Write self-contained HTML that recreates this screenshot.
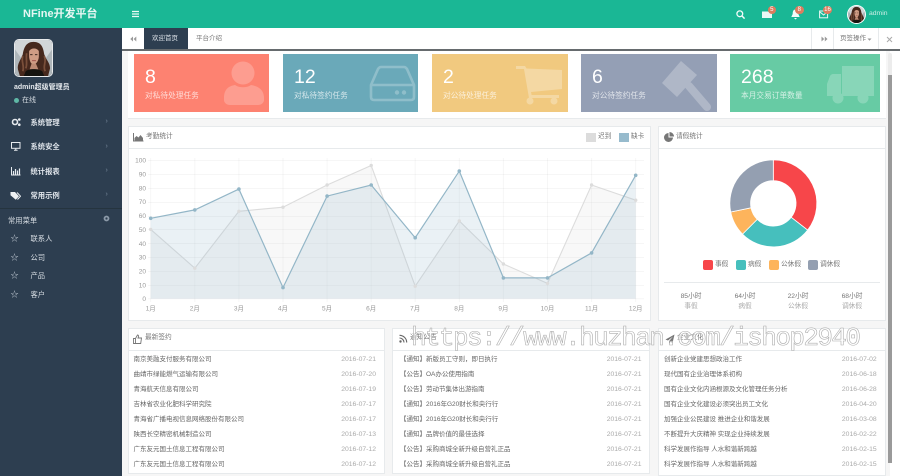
<!DOCTYPE html>
<html lang="zh"><head><meta charset="utf-8"><title>NFine开发平台</title>
<style>
html,body{margin:0;padding:0;width:900px;height:476px;overflow:hidden;background:#fff}
body{position:relative;font-family:"Liberation Sans","Noto Sans CJK SC",sans-serif;color:#676a6c}
#w{position:absolute;left:0;top:0;width:900px;height:476px;overflow:hidden;filter:blur(.3px)}
.a,.t{position:absolute}
.t{white-space:nowrap;line-height:1}
.panel{position:absolute;background:#fff;border:1px solid #e7eaec;box-sizing:border-box}
.hd{position:absolute;left:0;right:0;top:0;height:21px;border-bottom:1px solid #e7eaec}
.card{position:absolute;top:54px;height:58px;color:#fff;overflow:hidden}
.card .n{position:absolute;left:11px;top:13.500px;font-size:19.500px;line-height:1}
.card .l{position:absolute;left:11px;top:38px;font-size:7.700px;line-height:1;white-space:nowrap;opacity:.72}
.card svg{position:absolute;left:0;top:0}
.m{color:#dfe4ea;font-size:7.300px;font-weight:bold}
.s{color:#c4ccd6;font-size:7.300px}
.row{position:absolute;height:15px;line-height:15px;font-size:6.500px;white-space:nowrap;color:#666}
.row b{position:absolute;right:0;top:0;font-weight:normal;font-size:6.800px;color:#aaa}
.tt{font-size:6.700px;color:#777}
</style></head>
<body>
<svg width="0" height="0" style="position:absolute"><defs>
<symbol id="face" viewBox="0 0 38 38">
<rect width="38" height="38" fill="#aeb5b9"/>
<path d="M0 0H38V10L31 20 7 20 0 10Z" fill="#d2d6d8"/>
<path d="M19 2C11 2 9 9 8 15 6 21 2 25 3 31L5 38H34L36 30C36 24 32 21 30 15 29 8 27 2 19 2Z" fill="#46281d"/>
<path d="M14.500 12C16 8 23 8 24.500 12L24.500 18C24 23 21 26 19 26 17 26 15 23 14.500 18Z" fill="#cf9c84"/>
<path d="M17 25H21.500L24 31 15 31Z" fill="#bd8a73"/>
<path d="M11 33C14 30 24 30 28 33L30 38H9Z" fill="#15130f"/>
<path d="M15.500 15.500h2.500M20.500 15.500h2.500" stroke="#2a1a14" stroke-width=".9"/>
<path d="M17.500 21.800h4" stroke="#9c4a44" stroke-width=".9"/>
<path d="M8 17C6 23 10 27 8 33M30 17C33 23 28 27 31 33M12 14C11 20 13 26 11 30" stroke="#7a4f3a" stroke-width="1.800" fill="none"/>
</symbol>
</defs></svg>
<div id="w">

<!-- topbar -->
<div class="a" style="left:0;top:0;width:900px;height:28px;background:#1ab795"></div>
<div class="t" style="left:23px;top:9px;font-size:11px;font-weight:bold;color:#e6f7f3">NFine开发平台</div>
<svg class="a" style="left:131px;top:10px" width="9" height="8"><path d="M1 1.500h7M1 4h7M1 6.500h7" stroke="#eafaf6" stroke-width="1.200"/></svg>
<svg class="a" style="left:735px;top:9px" width="11" height="11"><circle cx="4.800" cy="4.800" r="2.900" fill="none" stroke="#f2fbf9" stroke-width="1.300"/><path d="M7 7l2.600 2.600" stroke="#f2fbf9" stroke-width="1.500"/></svg>
<svg class="a" style="left:762px;top:10px" width="11" height="9"><path d="M0 1.500h6l4 2v4.500H0z" fill="#eaf8f5"/></svg>
<svg class="a" style="left:791px;top:9px" width="9" height="11"><path d="M4.500 0.500C7 .5 7.300 3 7.300 5L8.700 8H.3L1.700 5C1.700 3 2 .5 4.500.5ZM3 9h3l-1.500 1.500z" fill="#f3fbf9"/></svg>
<svg class="a" style="left:819px;top:10px" width="10" height="9"><rect x=".6" y="1" width="8" height="6.800" fill="none" stroke="#eaf8f5"/><path d="M1 2l3.600 3 3.600-3" fill="none" stroke="#eaf8f5"/></svg>
<div class="a" style="left:767.500px;top:5.500px;width:8.500px;height:8.500px;border-radius:50%;background:#dd7d5f;color:#fff;font-size:6px;line-height:8.500px;text-align:center">5</div>
<div class="a" style="left:795px;top:5.500px;width:8.500px;height:8.500px;border-radius:50%;background:#dd7d5f;color:#fff;font-size:6px;line-height:8.500px;text-align:center">8</div>
<div class="a" style="left:823px;top:5.500px;width:9px;height:8.500px;border-radius:50%;background:#dd7d5f;color:#fff;font-size:6px;line-height:8.500px;text-align:center">16</div>
<div class="a" style="left:847px;top:4.500px;width:19px;height:19px;border-radius:50%;overflow:hidden;background:#fff"><svg style="position:absolute;left:1px;top:1px;border-radius:50%" width="17" height="17"><use href="#face"/></svg></div>
<div class="t" style="left:869px;top:11px;font-size:6.800px;color:#cdeee6">admin</div>

<!-- sidebar -->
<div class="a" style="left:0;top:28px;width:122px;height:448px;background:#2d3e50"></div>
<div class="a" style="left:14px;top:39px;width:39px;height:38px;box-sizing:border-box;border:1px solid #e8eaec;border-radius:5px;overflow:hidden"><svg style="display:block" width="37" height="36" preserveAspectRatio="none" viewBox="0 0 38 38"><use href="#face" width="38" height="38"/></svg></div>
<div class="t" style="left:14px;top:83.500px;font-size:7px;font-weight:bold;color:#e4e8ec">admin超级管理员</div>
<div class="a" style="left:14px;top:98px;width:5px;height:5px;border-radius:50%;background:#5fb8a6"></div>
<div class="t" style="left:22px;top:97px;font-size:7px;color:#d4dae0">在线</div>

<svg class="a" style="left:11px;top:117px" width="10" height="10"><circle cx="4" cy="5" r="2.500" fill="none" stroke="#e6eaee" stroke-width="1.600"/><circle cx="8.300" cy="2.500" r="1.300" fill="#e6eaee"/><circle cx="8.300" cy="7.700" r="1.300" fill="#e6eaee"/></svg>
<div class="t m" style="left:30.500px;top:118.500px">系统管理</div>
<svg class="a" style="left:11px;top:142px" width="10" height="9"><rect x=".5" y=".5" width="8.500" height="5.800" fill="#2d3e50" stroke="#e6eaee"/><path d="M3 8.200h3.600M4.800 6v2" stroke="#e6eaee"/></svg>
<div class="t m" style="left:30.500px;top:143px">系统安全</div>
<svg class="a" style="left:11px;top:167px" width="10" height="9"><path d="M.5 0v8h9" fill="none" stroke="#e6eaee"/><path d="M2.500 4v3.500M4.500 2v5.500M6.500 3.500v4M8.500 1.500v6" stroke="#e6eaee" stroke-width="1.200"/></svg>
<div class="t m" style="left:30.500px;top:167.500px">统计报表</div>
<svg class="a" style="left:10px;top:191px" width="11" height="10"><path d="M.5 1H5l4 4.200-3.200 3.600L.5 4.200z" fill="#eef1f3"/><path d="M7 1.500l3.500 3.700L7.500 8.500" fill="none" stroke="#eef1f3"/></svg>
<div class="t m" style="left:30.500px;top:192px">常用示例</div>
<div class="t" style="left:105.500px;top:118px;font-size:7px;color:#77879a">›</div>
<div class="t" style="left:105.500px;top:142.500px;font-size:7px;color:#77879a">›</div>
<div class="t" style="left:105.500px;top:167px;font-size:7px;color:#77879a">›</div>
<div class="t" style="left:105.500px;top:191px;font-size:7px;color:#77879a">›</div>
<div class="a" style="left:0;top:208px;width:122px;height:1px;background:#25343f"></div>
<div class="t s" style="left:8px;top:216.500px;color:#d6dce2">常用菜单</div>
<svg class="a" style="left:103px;top:215px" width="7" height="7"><circle cx="3.500" cy="3.500" r="2" fill="none" stroke="#8b99a8" stroke-width="1.800"/></svg>
<div class="t s" style="left:10.500px;top:235px;font-size:8px">☆</div><div class="t s" style="left:30.500px;top:235px;color:#d6dce2">联系人</div>
<div class="t s" style="left:10.500px;top:253.500px;font-size:8px">☆</div><div class="t s" style="left:30.500px;top:253.500px;color:#d6dce2">公司</div>
<div class="t s" style="left:10.500px;top:272px;font-size:8px">☆</div><div class="t s" style="left:30.500px;top:272px;color:#d6dce2">产品</div>
<div class="t s" style="left:10.500px;top:290.500px;font-size:8px">☆</div><div class="t s" style="left:30.500px;top:290.500px;color:#d6dce2">客户</div>

<!-- content background -->
<div class="a" style="left:122px;top:50px;width:768px;height:426px;background:#f6f6f6"></div>

<!-- tabs -->
<div class="a" style="left:122px;top:28px;width:778px;height:21px;background:#fff"></div>
<div class="a" style="left:122px;top:49px;width:778px;height:1.500px;background:#666b6e"></div>
<svg class="a" style="left:130px;top:36px" width="7" height="6"><path d="M3 .5v5L.3 3zM6.300 .5v5L3.600 3z" fill="#999"/></svg>
<div class="a" style="left:144px;top:28px;width:44px;height:21px;background:#2d3e50"></div>
<div class="t" style="left:152px;top:35.500px;font-size:6.500px;color:#dfe4ea">欢迎首页</div>
<div class="t" style="left:196px;top:35.500px;font-size:6.500px;color:#777">平台介绍</div>
<div class="a" style="left:811px;top:28px;width:1px;height:21px;background:#e7eaec"></div>
<div class="a" style="left:833px;top:28px;width:1px;height:21px;background:#e7eaec"></div>
<div class="a" style="left:878px;top:28px;width:1px;height:21px;background:#e7eaec"></div>
<svg class="a" style="left:820.500px;top:36px" width="7" height="6"><path d="M.5 .5v5L3.200 3zM3.800 .5v5L6.500 3z" fill="#999"/></svg>
<div class="t" style="left:840px;top:35.500px;font-size:6.500px;color:#777">页签操作</div>
<svg class="a" style="left:867px;top:38px" width="5" height="3"><path d="M.5 .5h4L2.500 2.800z" fill="#999"/></svg>
<svg class="a" style="left:886px;top:35.500px" width="7" height="7"><path d="M1 1l5 5M6 1L1 6" stroke="#aaa" stroke-width="1"/></svg>

<!-- cards panel -->
<div class="a" style="left:128px;top:50.500px;width:758px;height:68px;background:#fff;border-bottom:1px solid #e7eaec;box-sizing:border-box"></div>
<div class="card" style="left:134px;width:135px;background:#fd8271"><div class="n">8</div><div class="l">对私待处理任务</div>
<svg width="135" height="58"><g fill="#fff" opacity=".22"><circle cx="109" cy="19" r="11.500"/><path d="M90 44c0-9 5-12 11-13 4 3 12 3 16 0 6 1 13 4 13 13v2c0 3-3 5-6 5H96c-3 0-6-2-6-5z"/></g></svg></div>
<div class="card" style="left:283px;width:135px;background:#6aa9b9"><div class="n">12</div><div class="l">对私待签约任务</div>
<svg width="135" height="58"><g fill="none" stroke="#fff" stroke-width="2.600" opacity=".25"><path d="M88 31l7-16c1-1.500 2-2 3-2h23c1 0 2 .5 3 2l7 16v12c0 2-1 3-3 3H91c-2 0-3-1-3-3z"/><path d="M88 31h43"/></g><circle cx="114" cy="38.500" r="2.200" fill="#fff" opacity=".25"/><circle cx="121" cy="38.500" r="2.200" fill="#fff" opacity=".25"/></svg></div>
<div class="card" style="left:432px;width:136px;background:#f1c97f"><div class="n">2</div><div class="l">对公待处理任务</div>
<svg width="136" height="58"><g fill="#fff" opacity=".28"><path d="M84 12h9l1.500 2.500L130 16v19l-31 3 .6 3H127v3H97L92 15h-8z"/><circle cx="98" cy="47" r="3.500"/><circle cx="122" cy="47" r="3.500"/></g></svg></div>
<div class="card" style="left:581px;width:136px;background:#949fb5"><div class="n">6</div><div class="l">对公待签约任务</div>
<svg width="136" height="58"><g opacity=".25"><path d="M100 7l16 14-20 22-15-14z" fill="#fff"/><path d="M108 32l18 21" stroke="#fff" stroke-width="8" stroke-linecap="round"/></g></svg></div>
<div class="card" style="left:730px;width:150px;background:#67cba4"><div class="n">268</div><div class="l">本月交易订单数量</div>
<svg width="150" height="58"><g fill="#fff" opacity=".22"><path d="M112 12h32v30h-32zM97 30l3-8c1-1.500 2-2 3-2h8v22H97z"/><circle cx="108" cy="44" r="5.500"/><circle cx="133" cy="44" r="5.500"/></g></svg></div>

<!-- scrollbar -->
<div class="a" style="left:888px;top:53px;width:4px;height:410px;background:#ececec;border-radius:2px"></div>
<div class="a" style="left:888px;top:75px;width:4px;height:388px;background:#9a9a9a"></div>

<!-- chart panel -->
<div class="panel" style="left:127.500px;top:126px;width:523.500px;height:195px"><div class="hd"></div></div>
<svg class="a" style="left:133px;top:133px" width="11" height="9"><path d="M.5 0v8h10" fill="none" stroke="#777"/><path d="M1.500 7.500V5l2-2 2 1.500L7.500 2l2.500 3v2.500z" fill="#777"/></svg>
<div class="t tt" style="left:146px;top:134.300px">考勤统计</div>
<div class="a" style="left:586px;top:132.500px;width:10px;height:9px;background:#dcdcdc"></div>
<div class="t tt" style="left:598px;top:134.300px">迟到</div>
<div class="a" style="left:619px;top:132.500px;width:9.500px;height:9px;background:#97bbcd"></div>
<div class="t tt" style="left:631px;top:134.300px">缺卡</div>

<svg class="a" style="left:128px;top:150px" width="522" height="165" viewBox="128 150 522 165">
<g stroke="#000" stroke-opacity=".035" stroke-width="1">
<path d="M148 160.500H644M148 174.500H644M148 188.500H644M148 202.500H644M148 216.500H644M148 229.500H644M148 243.500H644M148 257.500H644M148 271.500H644M148 285.500H644M148 298.700H644"/>
<path d="M150.700 158V302M194.800 158V302M238.900 158V302M283 158V302M327.100 158V302M371.200 158V302M415.200 158V302M459.300 158V302M503.400 158V302M547.500 158V302M591.600 158V302M635.700 158V302"/>
</g>
<path d="M150.700 229.400L194.800 268.200 238.900 211.300 283 207.200 327.100 185 371.200 165.500 415.200 286.200 459.300 221 503.400 264 547.500 283.400 591.600 185 635.700 200.200V298.700H150.700Z" fill="#dcdcdc" fill-opacity=".2"/>
<path d="M150.700 229.400L194.800 268.200 238.900 211.300 283 207.200 327.100 185 371.200 165.500 415.200 286.200 459.300 221 503.400 264 547.500 283.400 591.600 185 635.700 200.200" fill="none" stroke="#dcdcdc" stroke-width="1.100"/>
<path d="M150.700 218.300L194.800 209.900 238.900 189.100 283 287.600 327.100 196.100 371.200 185 415.200 237.700 459.300 171.100 503.400 277.900 547.500 277.900 591.600 252.900 635.700 175.300V298.700H150.700Z" fill="#97bbcd" fill-opacity=".2"/>
<path d="M150.700 218.300L194.800 209.900 238.900 189.100 283 287.600 327.100 196.100 371.200 185 415.200 237.700 459.300 171.100 503.400 277.900 547.500 277.900 591.600 252.900 635.700 175.300" fill="none" stroke="#93b6c7" stroke-width="1.200"/>
<g fill="#dcdcdc"><circle cx="150.700" cy="229.400" r="1.700"/><circle cx="194.800" cy="268.200" r="1.700"/><circle cx="238.900" cy="211.300" r="1.700"/><circle cx="283" cy="207.200" r="1.700"/><circle cx="327.100" cy="185" r="1.700"/><circle cx="371.200" cy="165.500" r="1.700"/><circle cx="415.200" cy="286.200" r="1.700"/><circle cx="459.300" cy="221" r="1.700"/><circle cx="503.400" cy="264" r="1.700"/><circle cx="547.500" cy="283.400" r="1.700"/><circle cx="591.600" cy="185" r="1.700"/><circle cx="635.700" cy="200.200" r="1.700"/></g>
<g fill="#93b6c7"><circle cx="150.700" cy="218.300" r="1.800"/><circle cx="194.800" cy="209.900" r="1.800"/><circle cx="238.900" cy="189.100" r="1.800"/><circle cx="283" cy="287.600" r="1.800"/><circle cx="327.100" cy="196.100" r="1.800"/><circle cx="371.200" cy="185" r="1.800"/><circle cx="415.200" cy="237.700" r="1.800"/><circle cx="459.300" cy="171.100" r="1.800"/><circle cx="503.400" cy="277.900" r="1.800"/><circle cx="547.500" cy="277.900" r="1.800"/><circle cx="591.600" cy="252.900" r="1.800"/><circle cx="635.700" cy="175.300" r="1.800"/></g>
<g fill="#999" text-anchor="end" font-size="6.500">
<text x="146" y="162.500">100</text><text x="146" y="176.400">90</text><text x="146" y="190.300">80</text><text x="146" y="204.100">70</text><text x="146" y="218">60</text><text x="146" y="231.900">50</text><text x="146" y="245.800">40</text><text x="146" y="259.600">30</text><text x="146" y="273.500">20</text><text x="146" y="287.400">10</text><text x="146" y="301">0</text>
</g>
<g fill="#999" text-anchor="middle" font-size="6.500">
<text x="150.700" y="310.500">1月</text><text x="194.800" y="310.500">2月</text><text x="238.900" y="310.500">3月</text><text x="283" y="310.500">4月</text><text x="327.100" y="310.500">5月</text><text x="371.200" y="310.500">6月</text><text x="415.200" y="310.500">7月</text><text x="459.300" y="310.500">8月</text><text x="503.400" y="310.500">9月</text><text x="547.500" y="310.500">10月</text><text x="591.600" y="310.500">11月</text><text x="635.700" y="310.500">12月</text>
</g>
</svg>

<!-- donut panel -->
<div class="panel" style="left:658px;top:126px;width:228px;height:195px"><div class="hd"></div></div>
<svg class="a" style="left:664px;top:132px" width="10" height="10"><path d="M4.500 1v4.500H9A4.500 4.500 0 1 1 4.500 1z" fill="#777"/><path d="M5.500 0A4.500 4.500 0 0 1 10 4.500H5.500z" fill="#777"/></svg>
<div class="t tt" style="left:676px;top:134.300px">请假统计</div>
<svg class="a" style="left:720px;top:150px" width="108" height="108" viewBox="720 150 108 108">
<g stroke="#fff" stroke-width=".8">
<path d="M773.300 159.800A43.500 43.500 0 0 1 807.600 230.100L791.200 217.300A22.700 22.700 0 0 0 773.300 180.600Z" fill="#f7464a"/>
<path d="M807.600 230.100A43.500 43.500 0 0 1 742.500 234.100L757.200 219.400A22.700 22.700 0 0 0 791.200 217.300Z" fill="#46bfbd"/>
<path d="M742.500 234.100A43.500 43.500 0 0 1 730.700 212L751 207.800A22.700 22.700 0 0 0 757.200 219.400Z" fill="#fdb45c"/>
<path d="M730.700 212A43.500 43.500 0 0 1 773.300 159.800L773.300 180.600A22.700 22.700 0 0 0 751 207.800Z" fill="#949fb1"/>
</g>
</svg>
<div class="a" style="left:703px;top:260px;width:10px;height:10px;border-radius:2px;background:#f7464a"></div><div class="t tt" style="left:715px;top:262px">事假</div>
<div class="a" style="left:736px;top:260px;width:10px;height:10px;border-radius:2px;background:#46bfbd"></div><div class="t tt" style="left:748px;top:262px">病假</div>
<div class="a" style="left:769px;top:260px;width:10px;height:10px;border-radius:2px;background:#fdb45c"></div><div class="t tt" style="left:781px;top:262px">公休假</div>
<div class="a" style="left:808px;top:260px;width:10px;height:10px;border-radius:2px;background:#949fb1"></div><div class="t tt" style="left:820px;top:262px">调休假</div>
<div class="a" style="left:664px;top:282px;width:216px;height:1px;background:#e7eaec"></div>
<div class="t tt" style="left:670px;width:42px;text-align:center;top:293.500px">85小时</div><div class="t tt" style="left:670px;width:42px;text-align:center;top:303.500px;color:#aaa">事假</div>
<div class="t tt" style="left:724px;width:42px;text-align:center;top:293.500px">64小时</div><div class="t tt" style="left:724px;width:42px;text-align:center;top:303.500px;color:#aaa">病假</div>
<div class="t tt" style="left:777px;width:42px;text-align:center;top:293.500px">22小时</div><div class="t tt" style="left:777px;width:42px;text-align:center;top:303.500px;color:#aaa">公休假</div>
<div class="t tt" style="left:831px;width:42px;text-align:center;top:293.500px">68小时</div><div class="t tt" style="left:831px;width:42px;text-align:center;top:303.500px;color:#aaa">调休假</div>

<!-- bottom panels -->
<div class="panel" style="left:127.500px;top:328px;width:257px;height:146px"><div class="hd"></div></div>
<svg class="a" style="left:133px;top:334px" width="9" height="10"><path d="M.5 4.500h2v5h-2zM2.500 4.500L4.500 1c1 0 1.300 1 1 2L5 4h3.500l-.8 5.500H2.500" fill="none" stroke="#777" stroke-width=".9"/></svg>
<div class="t tt" style="left:145px;top:335px">最新签约</div>
<div class="row" style="left:133.500px;width:242.500px;top:352px">南京美融支付服务有限公司<b>2016-07-21</b></div>
<div class="row" style="left:133.500px;width:242.500px;top:367px">曲靖市绿能燃气运输有限公司<b>2016-07-20</b></div>
<div class="row" style="left:133.500px;width:242.500px;top:382px">青海航天信息有限公司<b>2016-07-19</b></div>
<div class="row" style="left:133.500px;width:242.500px;top:397px">吉林省农业化肥科学研究院<b>2016-07-17</b></div>
<div class="row" style="left:133.500px;width:242.500px;top:412px">青海省广播电视信息网络股份有限公司<b>2016-07-17</b></div>
<div class="row" style="left:133.500px;width:242.500px;top:427px">陕西长空精密机械制造公司<b>2016-07-13</b></div>
<div class="row" style="left:133.500px;width:242.500px;top:442px">广东友元国土信息工程有限公司<b>2016-07-12</b></div>
<div class="row" style="left:133.500px;width:242.500px;top:456.500px">广东友元国土信息工程有限公司<b>2016-07-12</b></div>

<div class="panel" style="left:392px;top:328px;width:258px;height:146px"><div class="hd"></div></div>
<svg class="a" style="left:399px;top:334px" width="9" height="9"><circle cx="1.500" cy="7.500" r="1.200" fill="#666"/><path d="M.5 4A4.500 4.500 0 0 1 5 8.500M.5 1.300A7.200 7.200 0 0 1 7.700 8.500" fill="none" stroke="#666" stroke-width="1.100"/></svg>
<div class="t tt" style="left:410px;top:335px">通知公告</div>
<div class="row" style="left:400px;width:241.500px;top:352px">【通知】新版员工守则，即日执行<b>2016-07-21</b></div>
<div class="row" style="left:400px;width:241.500px;top:367px">【公告】OA办公使用指南<b>2016-07-21</b></div>
<div class="row" style="left:400px;width:241.500px;top:382px">【公告】劳动节集体出游指南<b>2016-07-21</b></div>
<div class="row" style="left:400px;width:241.500px;top:397px">【通知】2016年G20财长和央行行<b>2016-07-21</b></div>
<div class="row" style="left:400px;width:241.500px;top:412px">【通知】2016年G20财长和央行行<b>2016-07-21</b></div>
<div class="row" style="left:400px;width:241.500px;top:427px">【通知】品牌价值的最佳选择<b>2016-07-21</b></div>
<div class="row" style="left:400px;width:241.500px;top:442px">【公告】采购商城全新升级自营礼正品<b>2016-07-21</b></div>
<div class="row" style="left:400px;width:241.500px;top:456.500px">【公告】采购商城全新升级自营礼正品<b>2016-07-21</b></div>

<div class="panel" style="left:658px;top:328px;width:228px;height:148px"><div class="hd"></div></div>
<svg class="a" style="left:665px;top:334px" width="10" height="10"><path d="M9.500.5L.5 5.500l2.500 1L8 2.500 4 7.200V9.500L5.500 8l2 1z" fill="#777"/></svg>
<div class="t tt" style="left:677px;top:335px">企业文化</div>
<div class="row" style="left:664px;width:212.700px;top:352px">创新企业党建思想政治工作<b>2016-07-02</b></div>
<div class="row" style="left:664px;width:212.700px;top:367px">现代国有企业治理体系初构<b>2016-06-18</b></div>
<div class="row" style="left:664px;width:212.700px;top:382px">国有企业文化内涵根源及文化管理任务分析<b>2016-06-28</b></div>
<div class="row" style="left:664px;width:212.700px;top:397px">国有企业文化建设必须突出员工文化<b>2016-04-20</b></div>
<div class="row" style="left:664px;width:212.700px;top:412px">加强企业公民建设 推进企业和谐发展<b>2016-03-08</b></div>
<div class="row" style="left:664px;width:212.700px;top:427px">不断提升大庆精神 实现企业持续发展<b>2016-02-22</b></div>
<div class="row" style="left:664px;width:212.700px;top:442px">科学发展作指导 人水和谐新跨越<b>2016-02-15</b></div>
<div class="row" style="left:664px;width:212.700px;top:456.500px">科学发展作指导 人水和谐新跨越<b>2016-02-15</b></div>

<!-- watermark -->
<svg class="a" style="left:0;top:0" width="900" height="476"><text x="411" y="345" font-family="'Liberation Mono',monospace" font-size="26" textLength="450" lengthAdjust="spacing" fill="#fff" fill-opacity=".6" stroke="#adadad" stroke-width=".6">https://www.huzhan.com/ishop2940</text></svg>
</div>
</body></html>
